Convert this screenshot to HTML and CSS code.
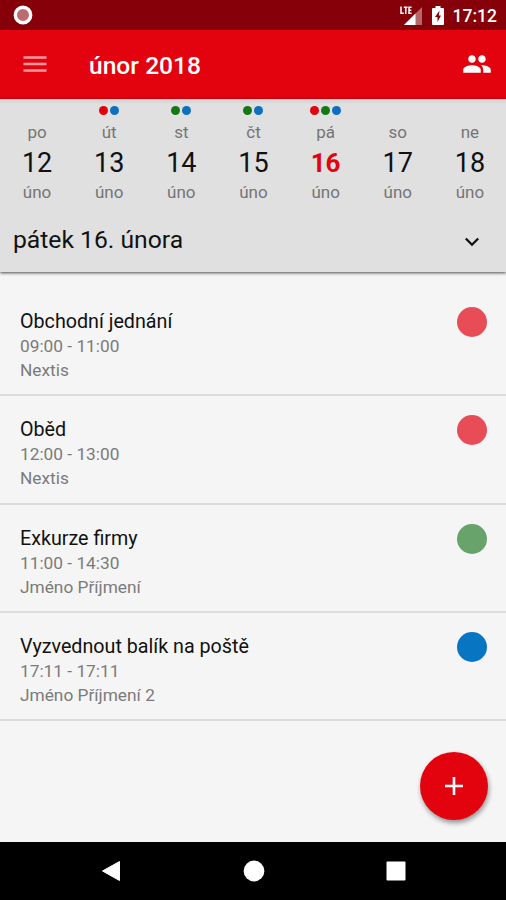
FILE: index.html
```html
<!DOCTYPE html>
<html lang="cs">
<head>
    <meta charset="UTF-8">
    <meta name="viewport" content="width=device-width, initial-scale=1.0">
    <title>únor 2018</title>
    <link rel="stylesheet" href="styles.css">
</head>
<body>
    <div class="status-bar">
        <svg class="record" viewBox="0 0 20 20" width="20" height="20">
            <circle cx="10" cy="10" r="7.7" fill="#bd6b70" stroke="#fff" stroke-width="3.4"/>
        </svg>
        <svg class="signal" viewBox="0 0 22 20" width="22" height="20">
            <path d="M22 2v18H4z" fill="#b4666a"/>
            <path d="M15.5 8.5V20H4z" fill="#fff"/>
            <path d="M1 1.500v6.800h2.800M3.800 2.200h3.800M5.800 2.200v6.800M11.600 2.200H9v6.100h2.600M9 5.200h2.300" fill="none" stroke="#fff" stroke-width="1.500"/>
        </svg>
        <svg class="battery" viewBox="0 0 12 19" width="12" height="19">
            <path d="M3.5 0h5v2H11q1 0 1 1v15q0 1-1 1H1q-1 0-1-1V3q0-1 1-1h2.500z" fill="#fff"/>
            <path d="M7.500 4.500L3 11h2.500v5L9 9.500H6.800z" fill="#850009"/>
        </svg>
        <span class="clock">17:12</span>
    </div>

    <header class="app-bar">
        <svg class="menu" viewBox="0 0 24 18" width="24" height="18">
            <path d="M.5 2.500h23M.5 9h23M.5 15.500h23" stroke="#ff9ba0" stroke-width="2.600"/>
        </svg>
        <h1>únor 2018</h1>
        <svg class="people" viewBox="0 0 24 24" width="30" height="30">
            <path fill="#fff" d="M16 11c1.660 0 2.990-1.340 2.990-3S17.660 5 16 5c-1.660 0-3 1.340-3 3s1.340 3 3 3zm-8 0c1.660 0 2.990-1.340 2.990-3S9.660 5 8 5C6.340 5 5 6.340 5 8s1.340 3 3 3zm0 2c-2.330 0-7 1.170-7 3.500V19h14v-2.500c0-2.330-4.670-3.500-7-3.500zm8 0c-.29 0-.62.020-.97.050 1.160.84 1.970 1.970 1.970 3.450V19h6v-2.500c0-2.330-4.670-3.500-7-3.500z"/>
        </svg>
    </header>

    <section class="calendar">
        <div class="week">
            <div class="day">
                <div class="dots"></div>
                <span class="name">po</span>
                <span class="number">12</span>
                <span class="month">úno</span>
            </div>
            <div class="day">
                <div class="dots"><i class="red"></i><i class="blue"></i></div>
                <span class="name">út</span>
                <span class="number">13</span>
                <span class="month">úno</span>
            </div>
            <div class="day">
                <div class="dots"><i class="green"></i><i class="blue"></i></div>
                <span class="name">st</span>
                <span class="number">14</span>
                <span class="month">úno</span>
            </div>
            <div class="day">
                <div class="dots"><i class="green"></i><i class="blue"></i></div>
                <span class="name">čt</span>
                <span class="number">15</span>
                <span class="month">úno</span>
            </div>
            <div class="day selected">
                <div class="dots"><i class="red"></i><i class="green"></i><i class="blue"></i></div>
                <span class="name">pá</span>
                <span class="number">16</span>
                <span class="month">úno</span>
            </div>
            <div class="day">
                <div class="dots"></div>
                <span class="name">so</span>
                <span class="number">17</span>
                <span class="month">úno</span>
            </div>
            <div class="day">
                <div class="dots"></div>
                <span class="name">ne</span>
                <span class="number">18</span>
                <span class="month">úno</span>
            </div>
        </div>
        <div class="current">
            <h2>pátek 16. února</h2>
            <svg viewBox="0 0 16 10" width="16" height="10">
                <path d="M1.800 1.500L8 7.700l6.200-6.200" fill="none" stroke="#111" stroke-width="2.300"/>
            </svg>
        </div>
    </section>

    <main class="events">
        <div class="event">
            <div>
                <h3>Obchodní jednání</h3>
                <p>09:00 - 11:00</p>
                <p>Nextis</p>
            </div>
            <span class="badge badge-red"></span>
        </div>
        <div class="event">
            <div>
                <h3>Oběd</h3>
                <p>12:00 - 13:00</p>
                <p>Nextis</p>
            </div>
            <span class="badge badge-red"></span>
        </div>
        <div class="event">
            <div>
                <h3>Exkurze firmy</h3>
                <p>11:00 - 14:30</p>
                <p>Jméno Příjmení</p>
            </div>
            <span class="badge badge-green"></span>
        </div>
        <div class="event">
            <div>
                <h3>Vyzvednout balík na poště</h3>
                <p>17:11 - 17:11</p>
                <p>Jméno Příjmení 2</p>
            </div>
            <span class="badge badge-blue"></span>
        </div>
        <button class="fab" aria-label="Přidat">
            <svg viewBox="0 0 18 18" width="18" height="18">
                <path d="M9 0v18M0 9h18" stroke="#fff" stroke-width="2.600"/>
            </svg>
        </button>
    </main>

    <nav class="nav-bar">
        <svg viewBox="0 0 22 22" width="22" height="22"><path d="M19.500 1.500v19L2.500 11z" fill="#fff" stroke="#fff" stroke-linejoin="round"/></svg>
        <svg viewBox="0 0 22 22" width="22" height="22"><circle cx="11" cy="11" r="10.400" fill="#fff"/></svg>
        <svg viewBox="0 0 22 22" width="22" height="22"><rect x="1.500" y="1.500" width="19" height="19" rx="1" fill="#fff"/></svg>
    </nav>
</body>
</html>
```
FILE: styles.css
```css
* {
    margin: 0;
    padding: 0;
    box-sizing: border-box;
}

body {
    font-family: Roboto, sans-serif;
    background: #f5f5f5;
    height: 900px;
    display: flex;
    flex-direction: column;
    overflow: hidden;
}

svg {
    display: block;
    flex-shrink: 0;
}

.status-bar {
    height: 30px;
    background: #850009;
    color: #fff;
    display: flex;
    align-items: center;
    padding: 0 9px 0 13px;
}

.signal {
    margin-left: auto;
}

.battery {
    margin: 0 9px 0 10px;
}

.clock {
    font-size: 17.5px;
    font-weight: 500;
    line-height: 30px;
    padding-top: 2px;
}

.app-bar {
    height: 69px;
    background: #e2030f;
    color: #fff;
    display: flex;
    align-items: center;
    padding: 0 14px 1px 23px;
}

.app-bar h1 {
    font-size: 24.6px;
    font-weight: 500;
    margin-left: 42px;
    padding-top: 3px;
}

.people {
    margin-left: auto;
}

.calendar {
    height: 173px;
    background: linear-gradient(#cfcfcf, #e0e0e0 5px);
    position: relative;
    box-shadow: 0 1px 3px rgba(0, 0, 0, 0.7);
}

.week {
    display: grid;
    grid-template-columns: repeat(7, 1fr);
    padding-left: 1px;
}

.day {
    display: flex;
    flex-direction: column;
    align-items: center;
    color: #757575;
    font-size: 17px;
    padding-top: 7px;
}

.dots {
    display: flex;
    gap: 2px;
    height: 8px;
}

.dots i {
    width: 9px;
    height: 9px;
    border-radius: 50%;
}

.red {
    background: #e2030f;
}

.green {
    background: #137a13;
}

.blue {
    background: #0d6fbe;
}

.name,
.month {
    line-height: 20px;
}

.name {
    margin-top: 8px;
}

.number {
    font-size: 27px;
    line-height: 32px;
    margin: 5px 0 3px;
    color: #111;
}

.selected .number {
    font-size: 26px;
    color: #e2030f;
    font-weight: 700;
}

.current {
    display: flex;
    align-items: center;
    justify-content: space-between;
    padding: 21px 26px 0 13px;
}

.current h2 {
    font-size: 24.7px;
    font-weight: 400;
    line-height: 34px;
    color: #111;
}

.current svg {
    margin-top: 3px;
}

.events {
    flex: 1;
    padding-top: 16px;
    position: relative;
}

.event {
    height: 108.3px;
    border-bottom: 2px solid #dcdcdc;
    display: flex;
    justify-content: space-between;
    padding: 19px 19px 0 20px;
}

.event h3 {
    font-size: 19.7px;
    font-weight: 400;
    line-height: 29px;
    margin-bottom: -2px;
    color: #111;
}

.event p {
    font-size: 17.3px;
    line-height: 24px;
    color: #7b7b7b;
}

.badge {
    width: 30px;
    height: 30px;
    border-radius: 50%;
}

.badge-red {
    background: #e84c57;
}

.badge-green {
    background: #68a36b;
}

.badge-blue {
    background: #0775c2;
}

.fab {
    position: absolute;
    right: 18px;
    bottom: 22px;
    width: 68px;
    height: 68px;
    border: none;
    border-radius: 50%;
    background: #e2030f;
    display: flex;
    align-items: center;
    justify-content: center;
    box-shadow: 1px 3px 5px rgba(0, 0, 0, 0.4);
}

.nav-bar {
    height: 58px;
    background: #000;
    display: flex;
    align-items: center;
    justify-content: space-between;
    padding: 0 99px 0 100px;
}
```
